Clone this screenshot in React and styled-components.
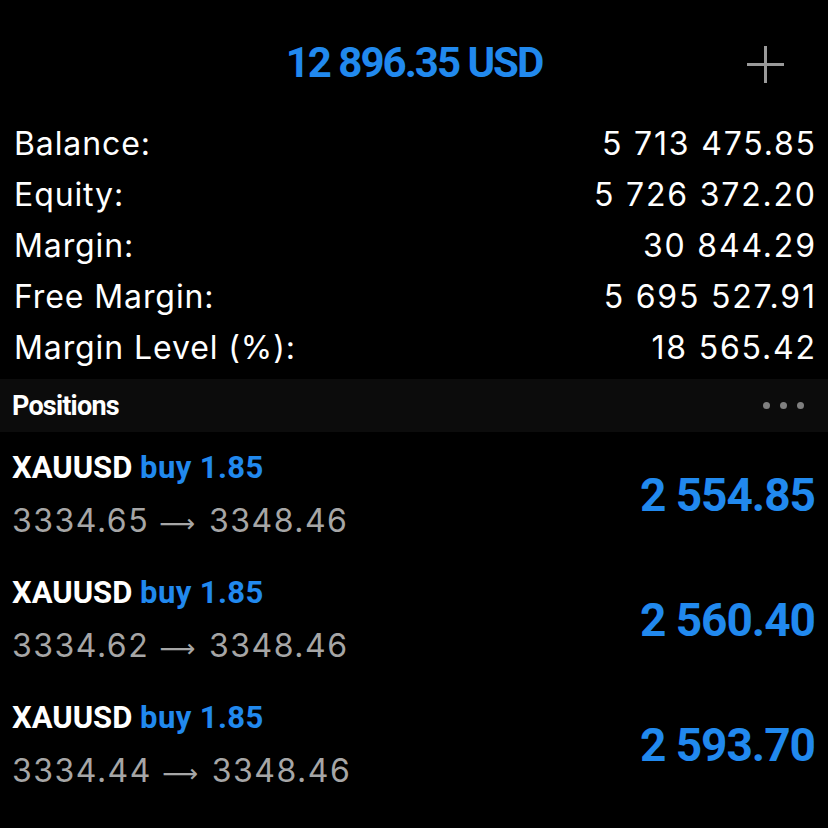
import styled, { createGlobalStyle } from "styled-components";

const GlobalStyle = createGlobalStyle`
  html, body {
    margin: 0;
    padding: 0;
    background: #000;
  }
  body {
    font-family: Inter, "Liberation Sans", Arial, sans-serif;
  }
`;

const BLUE = "#2189ee";
const BOLD = `Roboto, "Liberation Sans", Arial, sans-serif`;

const Screen = styled.div`
  width: 828px;
  height: 828px;
  background: #000;
  color: #fff;
  overflow: hidden;
`;

const Header = styled.div`
  height: 118px;
  display: grid;
  grid-template-columns: 1fr auto 1fr;
  align-items: center;
`;

const Total = styled.div`
  grid-column: 2;
  font-family: ${BOLD};
  font-weight: 700;
  font-size: 42px;
  letter-spacing: -2px;
  color: ${BLUE};
  margin-top: 6px;
`;

const AddButton = styled.div`
  grid-column: 3;
  justify-self: end;
  margin: 10px 44px 0 0;
  width: 37px;
  height: 37px;
  display: flex;
`;

const Summary = styled.div`
  padding: 0 13px 0 14px;
  display: flex;
  flex-direction: column;
`;

const SummaryRow = styled.div`
  height: 51px;
  display: flex;
  align-items: center;
  justify-content: space-between;
  font-size: 32px;
  color: #fff;
`;

const Label = styled.span`
  letter-spacing: 0.9px;
`;

const Value = styled.span`
  letter-spacing: 1.8px;
  margin-right: -1.8px;
`;

const SectionBar = styled.div`
  margin-top: 6px;
  height: 53px;
  background: #0c0c0c;
  display: flex;
  align-items: center;
  justify-content: space-between;
  padding: 0 24px 0 12px;
`;

const SectionTitle = styled.div`
  font-family: ${BOLD};
  font-weight: 700;
  font-size: 27px;
  letter-spacing: -0.8px;
`;

const Dots = styled.div`
  display: flex;
  gap: 10px;
`;

const Dot = styled.span`
  width: 7px;
  height: 7px;
  border-radius: 50%;
  background: #7f7f7f;
`;

const Position = styled.div`
  height: 125px;
  display: flex;
  align-items: center;
  justify-content: space-between;
  padding: 0 13px 0 12px;
`;

const PosInfo = styled.div`
  display: flex;
  flex-direction: column;
  gap: 17px;
  margin-top: 2px;
`;

const Symbol = styled.div`
  font-family: ${BOLD};
  font-weight: 700;
  font-size: 31px;
  line-height: 36px;
  color: #fff;

  span {
    color: ${BLUE};
    letter-spacing: 0.4px;
  }
`;

const Prices = styled.div`
  font-size: 32px;
  line-height: 36px;
  letter-spacing: 1.5px;
  color: #a6a6a6;
  white-space: nowrap;
`;

const Arrow = styled.span`
  font-family: "DejaVu Sans", sans-serif;
  font-size: 25px;
  letter-spacing: 0;
  margin: 0 14px 0 10px;
`;

const Profit = styled.div`
  font-family: ${BOLD};
  font-weight: 700;
  font-size: 46px;
  letter-spacing: -1px;
  color: ${BLUE};
`;

const summary = [
  ["Balance:", "5 713 475.85"],
  ["Equity:", "5 726 372.20"],
  ["Margin:", "30 844.29"],
  ["Free Margin:", "5 695 527.91"],
  ["Margin Level (%):", "18 565.42"],
];

const positions = [
  { open: "3334.65", close: "3348.46", profit: "2 554.85" },
  { open: "3334.62", close: "3348.46", profit: "2 560.40" },
  { open: "3334.44", close: "3348.46", profit: "2 593.70" },
];

export default function App() {
  return (
    <Screen>
      <GlobalStyle />
      <Header>
        <Total>12 896.35 USD</Total>
        <AddButton>
          <svg width="37" height="37" viewBox="0 0 37 37">
            <path d="M18.5 0v37M0 18.5h37" stroke="#9a9a9a" strokeWidth="3" />
          </svg>
        </AddButton>
      </Header>
      <Summary>
        {summary.map(([label, value]) => (
          <SummaryRow key={label}>
            <Label>{label}</Label>
            <Value>{value}</Value>
          </SummaryRow>
        ))}
      </Summary>
      <SectionBar>
        <SectionTitle>Positions</SectionTitle>
        <Dots>
          <Dot />
          <Dot />
          <Dot />
        </Dots>
      </SectionBar>
      {positions.map((p, i) => (
        <Position key={i}>
          <PosInfo>
            <Symbol>
              XAUUSD <span>buy 1.85</span>
            </Symbol>
            <Prices>
              {p.open}
              <Arrow>⟶</Arrow>
              {p.close}
            </Prices>
          </PosInfo>
          <Profit>{p.profit}</Profit>
        </Position>
      ))}
    </Screen>
  );
}
